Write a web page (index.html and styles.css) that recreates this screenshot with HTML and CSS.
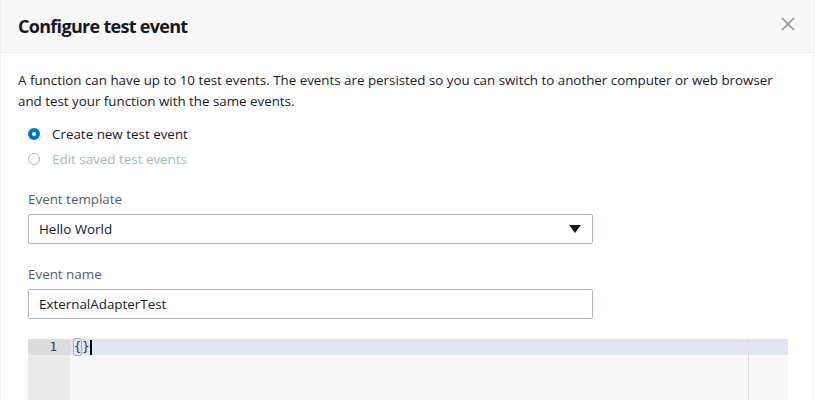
FILE: index.html
```html
<!DOCTYPE html>
<html>
<head>
<meta charset="utf-8">
<link rel="stylesheet" href="styles.css">
</head>
<body>
<div class="modal">
  <div class="header">
    <h2 class="title">Configure test event</h2>
    <svg class="close" width="14" height="14" viewBox="0 0 14 14"><path d="M1 1L13 13M13 1L1 13" stroke="#879596" stroke-width="1.6" fill="none"/></svg>
  </div>
  <div class="content">
    <p class="intro">A function can have up to 10 test events. The events are persisted so you can switch to another computer or web browser and test your function with the same events.</p>
    <div class="radios">
      <div class="radio"><span class="dot checked"></span><span class="rlabel">Create new test event</span></div>
      <div class="radio disabled"><span class="dot"></span><span class="rlabel">Edit saved test events</span></div>
    </div>
    <div class="field field-first">
      <div class="label">Event template</div>
      <div class="select"><span>Hello World</span><svg width="12" height="8" viewBox="0 0 12 8"><path d="M0 0H12L6 8Z" fill="#16191f"/></svg></div>
    </div>
    <div class="field">
      <div class="label">Event name</div>
      <div class="input">ExternalAdapterTest</div>
    </div>
    <div class="editor">
      <div class="gutter"><div class="gline active">1</div></div>
      <div class="code">
        <div class="cline active"><span class="brace">{</span>}<span class="cursor"></span></div>
        <div class="margin"></div>
      </div>
    </div>
  </div>
</div>
</body>
</html>
```
FILE: styles.css
```css
html, body { margin: 0; padding: 0; }
body { background: #fff; font-family: "Open Sans", "Noto Sans", sans-serif; color: #16191f; width: 815px; height: 400px; overflow: hidden; }
.modal { border-left: 1px solid #eef0f0; border-right: 1px solid #eef0f0; height: 400px; box-sizing: border-box; }
.header { height: 52px; background: #f8f8f8; border-bottom: 1px solid #eaeded; display: flex; align-items: center; justify-content: space-between; padding: 0 19px 0 17px; }
.title { margin: 0; font-size: 18px; font-weight: 700; letter-spacing: -0.7px; color: #16191f; }
.close { display: block; margin-top: -4px; }
.content { padding: 17px 17px 0 17px; }
.intro { margin: 0; font-size: 13.35px; line-height: 21px; }
.radios { padding: 9px 0 0 10px; }
.radio { display: flex; align-items: center; height: 25px; font-size: 13.4px; }
.dot { width: 10px; height: 10px; border: 1px solid #aab7b8; border-radius: 50%; margin-right: 12px; box-sizing: content-box; }
.dot.checked { width: 4px; height: 4px; border: 4px solid #0073bb; }
.disabled .rlabel { color: #aab7b8; }
.field { padding-top: 21px; margin-left: 10px; width: 565px; }
.field-first { padding-top: 19px; }
.label { font-size: 13.4px; color: #545b64; line-height: 18px; margin-bottom: 6px; }
.select, .input { height: 30px; box-sizing: border-box; border: 1px solid #aab7b8; border-radius: 2px; display: flex; align-items: center; justify-content: space-between; padding: 0 11px 0 10px; font-size: 13.4px; }
.editor { margin: 20px 9px 0 10px; height: 62px; display: flex; background: #f7f7f7; }
.gutter { width: 42px; background: #ebebeb; }
.gline { height: 16px; line-height: 16px; text-align: right; padding-right: 13px; font-family: "DejaVu Sans Mono", monospace; font-size: 12px; color: #333; }
.gline.active { background: #dcdcdc; }
.code { flex: 1; position: relative; }
.cline { height: 16px; line-height: 16px; padding-left: 4px; font-family: "DejaVu Sans Mono", monospace; font-size: 12px; color: #333; display: flex; align-items: center; }
.cline.active { background: #e0e5f0; }
.brace { border: 1px solid #aab0c8; border-radius: 2px; box-sizing: border-box; margin-left: -1px; }
.cursor { width: 2px; height: 15px; background: #000; margin-left: 1px; }
.margin { position: absolute; left: 678px; top: 0; bottom: 0; width: 1px; background: #dcdcdc; }
```
